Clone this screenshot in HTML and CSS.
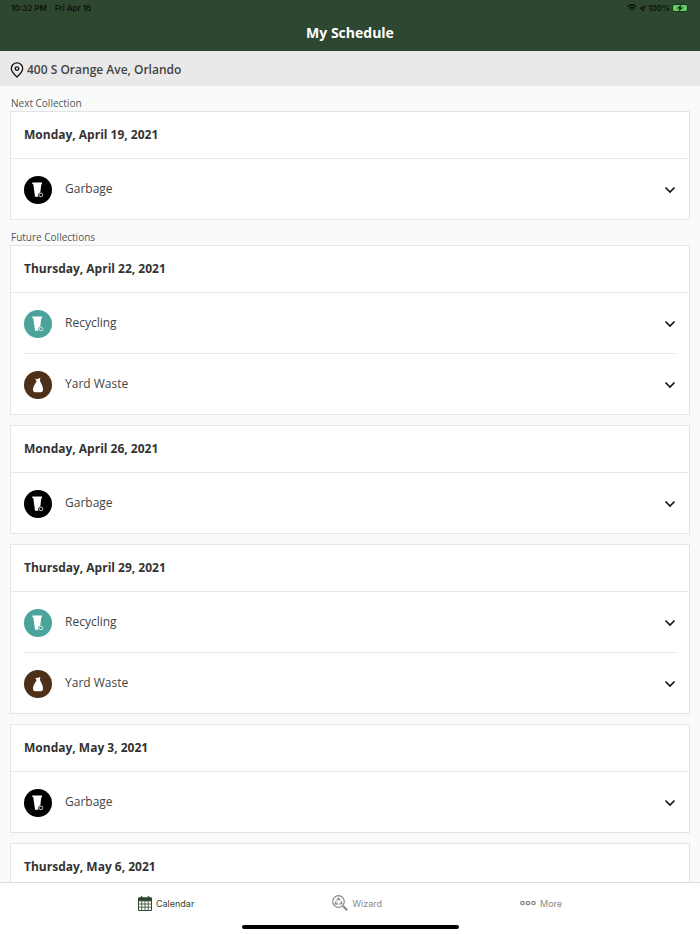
FILE: index.html
```html
<!DOCTYPE html>
<html lang="en">
<head>
  <meta charset="UTF-8">
  <meta name="viewport" content="width=device-width, initial-scale=1.0">
  <title>My Schedule</title>
  <link rel="stylesheet" href="styles.css">
</head>
<body>
  <!-- Shared icons -->
  <svg class="icon-defs" aria-hidden="true">
    <symbol id="icon-bin" viewBox="0 0 28 28">
      <path d="M8.300 6.500 L18 6.500 L18 8.200 L17.300 8.300 L16.300 16.500 A2.700 2.700 0 0 0 14.600 20.800 L11 20.800 L9.300 8.300 L8.300 8.100 Z" fill="#fff"/>
      <circle cx="17" cy="18.900" r="1.800" fill="none" stroke="#fff" stroke-width="1" stroke-opacity=".75"/>
    </symbol>
    <symbol id="icon-bag" viewBox="0 0 28 28">
      <path d="M11.200 7.800 L13.200 8 L16.300 6.900 L16 9.600 C16.300 12 19 14.500 19 18.500 C19 20.600 18 21.200 16.800 21.200 L11.200 21.200 C9.800 21.200 9 20.500 9 18.600 C9 14.800 12 12.500 12.500 10 Z" fill="#fff"/>
    </symbol>
    <symbol id="icon-chevron" viewBox="0 0 12 8">
      <path d="M1.500 1.500 L6 6 L10.500 1.500" fill="none" stroke="#111" stroke-width="1.600"/>
    </symbol>
  </svg>

  <header>
    <div class="status-bar">
      <span class="status-group">
        <span>10:32 PM</span>
        <span>Fri Apr 16</span>
      </span>
      <span class="status-group status-right">
        <svg width="10" height="8" viewBox="0 0 10 8" fill="none" stroke="#0b120c" stroke-width="1.400">
          <path d="M.7 2.700 Q5 -1 9.300 2.700"/>
          <path d="M2.400 4.600 Q5 2.400 7.600 4.600"/>
          <path d="M3.800 5.700 Q5 4.800 6.200 5.700 L5 7 Z" fill="#0b120c" stroke="none"/>
        </svg>
        <svg width="7" height="7" viewBox="0 0 7 7" fill="none" stroke="#0b120c" stroke-width=".9">
          <path d="M.8 3.400 L6.200 .8 L3.600 6.200 L3.400 3.600 Z"/>
        </svg>
        <span>100%</span>
        <svg width="18" height="8" viewBox="0 0 18 8">
          <rect x=".5" y=".5" width="15" height="7" rx="2" fill="#65cb62" stroke="#17331a"/>
          <path d="M9.500 .8 L4.500 4.500 L7.600 4.500 L6.500 7.200 L11.500 3.500 L8.400 3.500 Z" fill="#0b120c"/>
          <path d="M16.600 2.800 Q17.800 4 16.600 5.200 Z" fill="#17331a"/>
        </svg>
      </span>
    </div>
    <h1>My Schedule</h1>
  </header>

  <div class="address-bar">
    <svg width="14" height="16" viewBox="0 0 14 16" fill="none" stroke="#111" stroke-width="1.300">
      <path d="M7 15 C4.500 12.800 1.300 9.600 1.300 6.600 A5.700 5.700 0 0 1 12.700 6.600 C12.700 9.600 9.500 12.800 7 15 Z"/>
      <circle cx="7" cy="6.600" r="1.800"/>
    </svg>
    <span>400 S Orange Ave, Orlando</span>
  </div>

  <main>
    <h2>Next Collection</h2>
    <section class="card">
      <h3>Monday, April 19, 2021</h3>
      <button type="button" class="item">
        <svg class="badge garbage"><use href="#icon-bin"/></svg>
        <span class="name">Garbage</span>
        <svg class="chevron"><use href="#icon-chevron"/></svg>
      </button>
    </section>

    <h2>Future Collections</h2>
    <section class="card">
      <h3>Thursday, April 22, 2021</h3>
      <button type="button" class="item">
        <svg class="badge recycling"><use href="#icon-bin"/></svg>
        <span class="name">Recycling</span>
        <svg class="chevron"><use href="#icon-chevron"/></svg>
      </button>
      <button type="button" class="item">
        <svg class="badge yard-waste"><use href="#icon-bag"/></svg>
        <span class="name">Yard Waste</span>
        <svg class="chevron"><use href="#icon-chevron"/></svg>
      </button>
    </section>

    <section class="card">
      <h3>Monday, April 26, 2021</h3>
      <button type="button" class="item">
        <svg class="badge garbage"><use href="#icon-bin"/></svg>
        <span class="name">Garbage</span>
        <svg class="chevron"><use href="#icon-chevron"/></svg>
      </button>
    </section>

    <section class="card">
      <h3>Thursday, April 29, 2021</h3>
      <button type="button" class="item">
        <svg class="badge recycling"><use href="#icon-bin"/></svg>
        <span class="name">Recycling</span>
        <svg class="chevron"><use href="#icon-chevron"/></svg>
      </button>
      <button type="button" class="item">
        <svg class="badge yard-waste"><use href="#icon-bag"/></svg>
        <span class="name">Yard Waste</span>
        <svg class="chevron"><use href="#icon-chevron"/></svg>
      </button>
    </section>

    <section class="card">
      <h3>Monday, May 3, 2021</h3>
      <button type="button" class="item">
        <svg class="badge garbage"><use href="#icon-bin"/></svg>
        <span class="name">Garbage</span>
        <svg class="chevron"><use href="#icon-chevron"/></svg>
      </button>
    </section>

    <section class="card">
      <h3>Thursday, May 6, 2021</h3>
    </section>
  </main>

  <footer>
    <nav>
      <a href="#calendar" class="active">
        <svg width="14" height="15" viewBox="0 0 14 15" fill="none" stroke="currentColor">
          <path d="M.5 2 H13.500 V14.500 H.5 Z"/>
          <path d="M.5 2 H13.500 V4.800 H.5 Z" fill="currentColor"/>
          <path d="M3.500 .3 V3 M10.500 .3 V3" stroke-width="1.600"/>
          <path d="M3.750 5 V14 M7 5 V14 M10.250 5 V14 M.5 8 H13.500 M.5 11.200 H13.500" stroke-width=".8"/>
        </svg>
        <span>Calendar</span>
      </a>
      <a href="#wizard">
        <svg width="16" height="16" viewBox="0 0 16 16" fill="none" stroke="currentColor">
          <circle cx="6.500" cy="6.500" r="5.800" stroke-width="1.200"/>
          <path d="M4.700 5.300 L6.500 3.200 L8.300 5.300 M9 6.200 L9.800 8.600 L7.300 9 M5.900 9 L3.200 8.800 L4.200 6.300" stroke-width="1.300"/>
          <path d="M11 11 L15.200 15.200" stroke-width="2.200"/>
        </svg>
        <span>Wizard</span>
      </a>
      <a href="#more">
        <svg width="16" height="6" viewBox="0 0 16 6" fill="none" stroke="currentColor" stroke-width="1.300">
          <circle cx="2.500" cy="3" r="1.700"/>
          <circle cx="8" cy="3" r="1.700"/>
          <circle cx="13.500" cy="3" r="1.700"/>
        </svg>
        <span>More</span>
      </a>
    </nav>
    <div class="home-indicator"></div>
  </footer>
</body>
</html>
```
FILE: styles.css
```css
* {
  box-sizing: border-box;
}
body {
  margin: 0;
  height: 100vh;
  display: flex;
  flex-direction: column;
  font-family: "Open Sans", sans-serif;
  color: #333;
  background-color: #f9fbfa;
}
.icon-defs {
  display: none;
}
svg {
  display: block;
  flex-shrink: 0;
}

/* Header */
header {
  background-color: #2e4730;
  padding-bottom: 8px;
}
.status-bar {
  display: flex;
  justify-content: space-between;
  padding: 2px 10px 1px 11px;
  font-family: Inter, sans-serif;
  font-size: 8px;
  font-weight: 600;
  line-height: 12px;
  color: #0b120c;
}
.status-group {
  display: flex;
  align-items: center;
  gap: 8px;
}
.status-right {
  gap: 2px;
}
h1 {
  margin: 8px 0 0;
  font-size: 14px;
  font-weight: 700;
  line-height: 20px;
  text-align: center;
  color: #fff;
}

/* Address */
.address-bar {
  display: flex;
  align-items: center;
  gap: 3px;
  padding: 10px 10px 7px;
  background-color: #e9e9e9;
  font-size: 12px;
  font-weight: 600;
  line-height: 18px;
  color: #444;
}

/* Collection list */
main {
  flex: 1;
  min-height: 0;
  overflow-y: auto;
  scrollbar-width: none;
  padding: 0 10px;
}
h2 {
  margin: 0;
  padding: 9px 1px 0;
  font-size: 10px;
  font-weight: 400;
  line-height: 16px;
  color: #555;
}
.card {
  background-color: #fff;
  border: 1px solid #e2e5e3;
}
.card + .card {
  margin-top: 10px;
}
h3 {
  margin: 0;
  padding: 14px 13px;
  border-bottom: 1px solid #e8e8e8;
  font-size: 12px;
  font-weight: 700;
  line-height: 18px;
}
.item {
  display: flex;
  align-items: center;
  width: calc(100% - 26px);
  height: 60px;
  margin: 0 13px;
  padding: 2px 0 0;
  border: none;
  background: none;
  font-family: inherit;
  font-size: 12px;
  line-height: 18px;
  color: #444;
  text-align: left;
  cursor: pointer;
}
.item + .item {
  height: 61px;
  border-top: 1px solid #e8e8e8;
}
.badge {
  width: 28px;
  height: 28px;
  margin-right: 13px;
  border-radius: 50%;
}
.garbage {
  background-color: #000;
}
.recycling {
  background-color: #4ba39b;
}
.yard-waste {
  background-color: #4e2f17;
}
.name {
  flex: 1;
  padding-bottom: 2px;
}
.chevron {
  width: 12px;
  height: 8px;
}

/* Bottom tabs */
footer {
  background-color: #fff;
  border-top: 1px solid #dfdfdf;
  padding-bottom: 5px;
}
nav {
  display: flex;
  justify-content: space-evenly;
  padding-bottom: 2px;
}
nav a {
  display: flex;
  align-items: center;
  gap: 4px;
  height: 40px;
  font-family: Inter, sans-serif;
  font-size: 9px;
  font-weight: 400;
  color: #8a8a8a;
  text-decoration: none;
}
nav a.active {
  color: #2e4730;
}
.home-indicator {
  width: 31%;
  height: 4px;
  margin: 0 auto;
  border-radius: 2px;
  background-color: #000;
}
```
